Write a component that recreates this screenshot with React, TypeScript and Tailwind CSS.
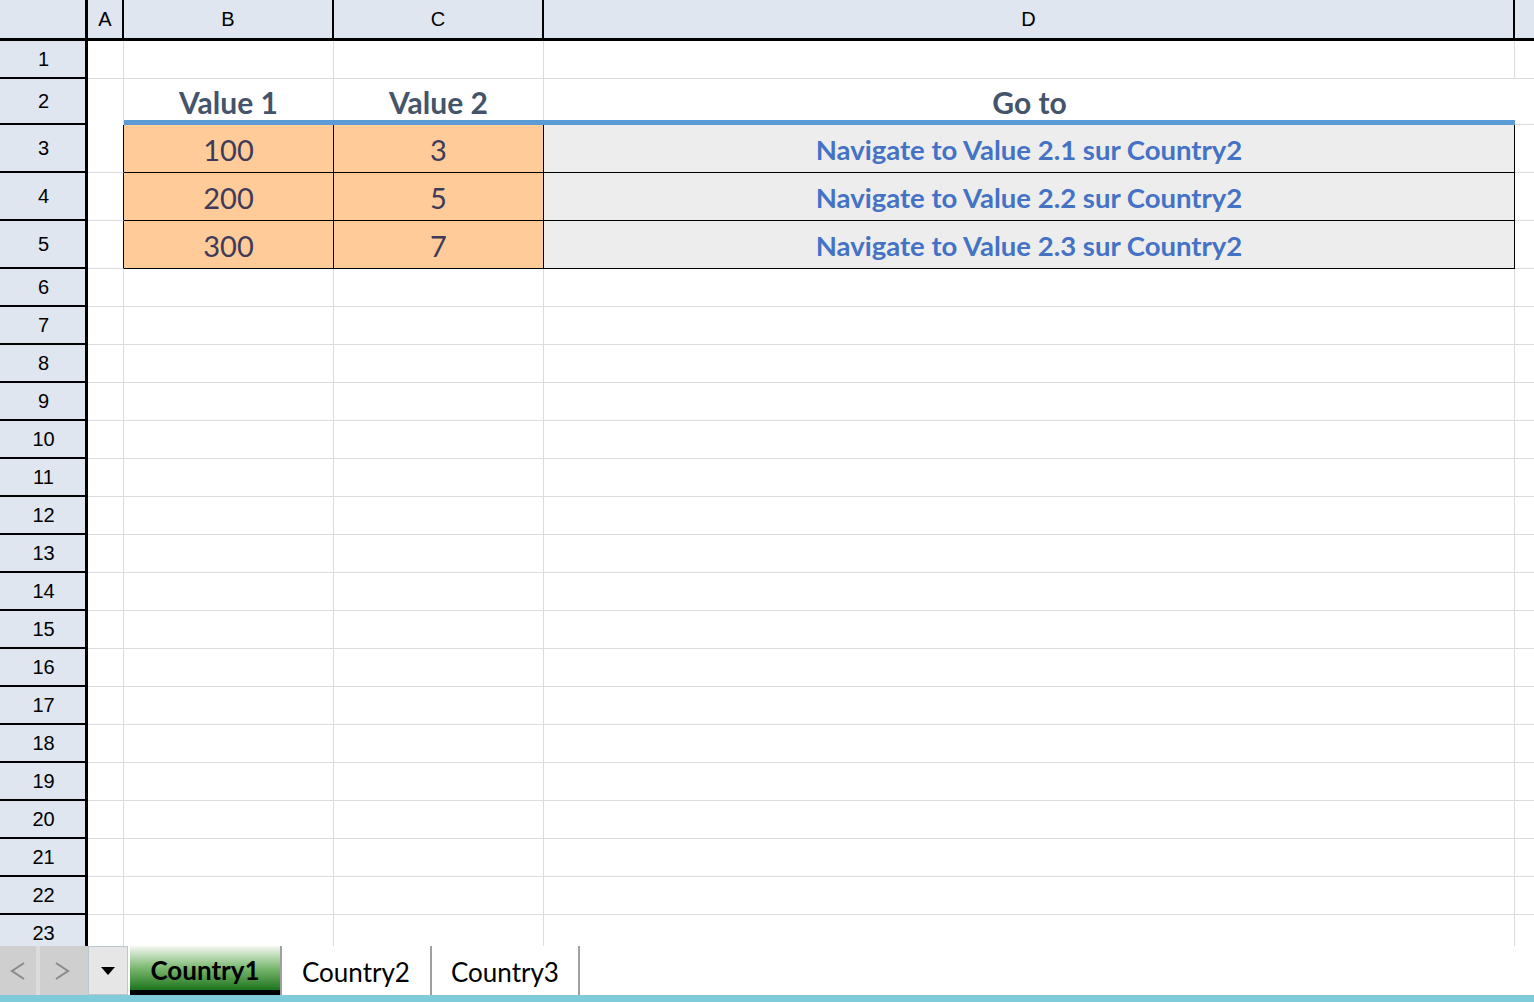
import React from "react";

const COLS = "grid grid-cols-[88px_36px_210px_210px_971px_19px]";
const cellFont = { fontFamily: "Lato, 'Open Sans', sans-serif" };
const headFont = { fontFamily: "'Liberation Sans', Arial, sans-serif" };

const links = [
  { v1: "100", v2: "3", label: "Navigate to Value 2.1 sur Country2" },
  { v1: "200", v2: "5", label: "Navigate to Value 2.2 sur Country2" },
  { v1: "300", v2: "7", label: "Navigate to Value 2.3 sur Country2" },
];

function RowHead({ n, h }: { n: number; h: string }) {
  return (
    <div
      className={`flex items-center justify-center border-r-[3px] border-b-2 border-black bg-[#dfe6ef] pl-[2px] text-[20px] text-black ${h}`}
      style={headFont}
    >
      {n}
    </div>
  );
}

function Empty({ last }: { last?: boolean }) {
  return <div className={last ? "border-b border-[#dcdcdc]" : "border-r border-b border-[#dcdcdc]"} />;
}

function Heading({ text, divider }: { text: string; divider?: boolean }) {
  return (
    <div className="flex flex-col">
      <div
        className={`flex flex-1 items-end justify-center pb-[3px] text-[30px] font-bold leading-none text-[#44546a] ${
          divider ? "border-r border-[#dcdcdc]" : ""
        }`}
      >
        {text}
      </div>
      <div className="h-[5px] bg-[#5b9bd5]" />
    </div>
  );
}

export default function App() {
  const blankRows = Array.from({ length: 18 }, (_, i) => i + 6);

  return (
    <div className="flex h-[1002px] w-[1534px] flex-col overflow-hidden bg-white">
      <div className="flex-1 overflow-hidden">
        {/* column headers */}
        <div className={`${COLS} h-[41px] bg-[#dfe6ef] text-[20px] text-black`} style={headFont}>
          <div className="border-r-[3px] border-b-[3px] border-black" />
          <div className="flex items-center justify-center border-r-2 border-b-[3px] border-black">A</div>
          <div className="flex items-center justify-center border-r-2 border-b-[3px] border-black">B</div>
          <div className="flex items-center justify-center border-r-2 border-b-[3px] border-black">C</div>
          <div className="flex items-center justify-center border-r-2 border-b-[3px] border-black">D</div>
          <div className="border-b-[3px] border-black" />
        </div>

        {/* row 1 */}
        <div className={`${COLS} h-[38px]`}>
          <RowHead n={1} h="h-[38px]" />
          <Empty />
          <Empty />
          <Empty />
          <Empty />
          <Empty last />
        </div>

        {/* row 2 - headings */}
        <div className={`${COLS} h-[46px]`} style={cellFont}>
          <RowHead n={2} h="h-[46px]" />
          <div className="border-r border-[#dcdcdc]" />
          <Heading text="Value 1" divider />
          <Heading text="Value 2" divider />
          <Heading text="Go to" />
          <div className="border-b border-[#dcdcdc]" />
        </div>

        {/* rows 3-5 - data */}
        {links.map((r, i) => (
          <div key={r.label} className={`${COLS} h-12`} style={cellFont}>
            <RowHead n={i + 3} h="h-12" />
            <div className="border-r border-b border-r-black border-b-[#dcdcdc]" />
            <div className="flex items-center justify-center border-r border-b border-black bg-[#ffcc99] pt-[3px] text-[29px] text-[#403a5a]">
              {r.v1}
            </div>
            <div className="flex items-center justify-center border-r border-b border-black bg-[#ffcc99] pt-[3px] text-[29px] text-[#403a5a]">
              {r.v2}
            </div>
            <div className="flex items-center justify-center border-r border-b border-black bg-[#ededed] pt-[3px] text-[27.5px] font-bold text-[#4472c4]">
              {r.label}
            </div>
            <div className="border-b border-[#dcdcdc]" />
          </div>
        ))}

        {/* blank rows */}
        {blankRows.map((n) => (
          <div key={n} className={`${COLS} h-[38px]`}>
            <RowHead n={n} h="h-[38px]" />
            <Empty />
            <Empty />
            <Empty />
            <Empty />
            <Empty last />
          </div>
        ))}
      </div>

      {/* sheet tabs */}
      <div className="flex h-[49px] items-stretch bg-white">
        <div className="flex w-[88px] bg-[#cfcfcf]">
          <button type="button" className="flex w-10 items-center justify-center border-r-4 border-[#dcdcdc]">
            <svg width="18" height="22" viewBox="0 0 18 22" fill="none" stroke="#8a8a8a" strokeWidth="2">
              <path d="M15 3 L3 11 L15 19" />
            </svg>
          </button>
          <button type="button" className="flex w-11 items-center justify-center">
            <svg width="18" height="22" viewBox="0 0 18 22" fill="none" stroke="#8a8a8a" strokeWidth="2">
              <path d="M3 3 L15 11 L3 19" />
            </svg>
          </button>
        </div>
        <button type="button" className="flex w-10 items-center justify-center border border-[#b8c8cc] bg-[#e6e6e6]">
          <svg width="14" height="8" viewBox="0 0 14 8">
            <path d="M0 0 H14 L7 8 Z" fill="#000" />
          </svg>
        </button>
        <div
          className="ml-[2px] flex w-[150px] items-center justify-center border-b-[5px] border-black bg-gradient-to-b from-[#f4f8f2] via-[#7ab870] to-[#17761a] pt-[4px] text-[26px] font-bold text-black"
          style={cellFont}
        >
          Country1
        </div>
        <div className="w-[2px] self-stretch bg-[#a0a0a0]" />
        <div className="flex w-[148px] items-center justify-center pt-[4px] text-[26px] text-black" style={cellFont}>
          Country2
        </div>
        <div className="w-[2px] self-stretch bg-[#a0a0a0]" />
        <div className="flex w-[146px] items-center justify-center pt-[4px] text-[26px] text-black" style={cellFont}>
          Country3
        </div>
        <div className="w-[2px] self-stretch bg-[#a0a0a0]" />
        <div className="flex-1" />
      </div>
      <div className="h-[7px] bg-[#80cbd9]" />
    </div>
  );
}
